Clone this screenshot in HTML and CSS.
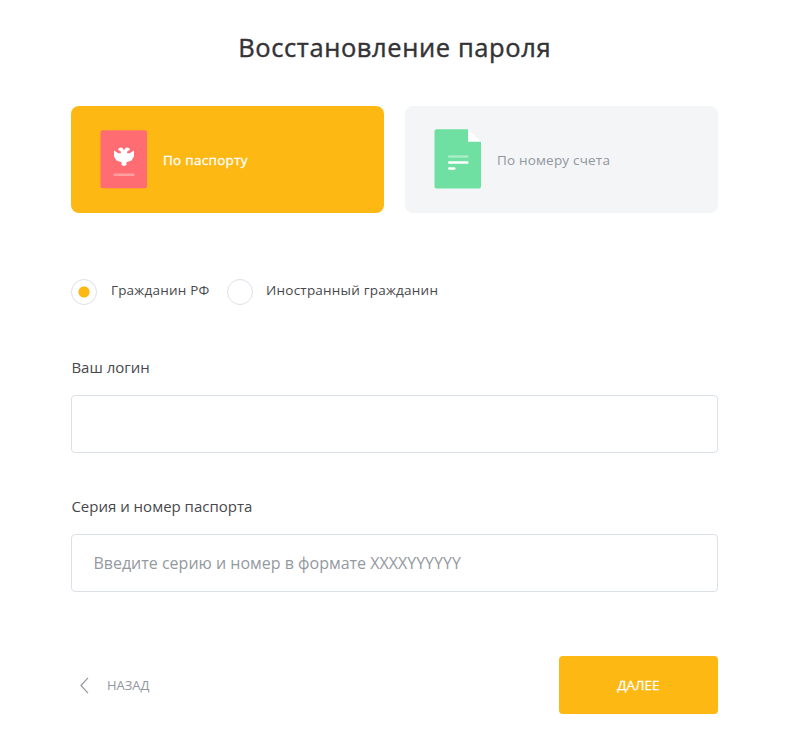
FILE: index.html
```html
<!DOCTYPE html>
<html lang="ru">
<head>
<meta charset="utf-8">
<title>Восстановление пароля</title>
<link rel="stylesheet" href="styles.css">
</head>
<body>
<form class="recovery">
  <h1 class="title"><span>Восстановление пароля</span></h1>
  <div class="methods">
    <button type="button" class="method method-active">
      <svg class="method-icon" width="47" height="60" viewBox="0 0 47 60">
        <rect x=".5" y="1.300" width="46.500" height="58" rx="2" fill="#ff6d72"/>
        <path fill="#fff" d="M14 21.500L18 24Q19.500 24.500 21 24.200L20.500 22Q18.500 22 18 20Q19 18.700 21 18.500Q23 18.500 23.500 20.500L24 21.200L24.500 20.500Q25 18.500 27 18.500Q29 18.700 30 20Q29.500 22 27.500 22L27 24.200Q28.500 24.500 30 24L34 21.500V27.500L31.500 31.500L27 33L26 34.500L27 35.500L24 37.300L21 35.500L22 34.500L21 33L16.500 31.500L14 27.500Z"/>
        <rect x="13.500" y="44.500" width="21" height="2.500" rx="1" fill="#fff" opacity=".35"/>
      </svg>
      <span>По паспорту</span>
    </button>
    <button type="button" class="method">
      <svg class="method-icon" width="47" height="60" viewBox="0 0 47 60">
        <path fill="#fff" d="M34 .3L47 12.800H34Z"/>
        <path fill="#70e0a2" d="M2.500 .3H34V12.800H47V57.500Q47 59.500 45 59.500H2.500Q.5 59.500 .5 57.500V2.300Q.5 .3 2.500 .3Z"/>
        <rect x="14" y="26.300" width="20.500" height="2.500" rx="1" fill="#fff" opacity=".4"/>
        <rect x="14" y="32.300" width="20.500" height="2.500" rx="1.250" fill="#fff"/>
        <rect x="14" y="38.300" width="7.500" height="2.500" rx="1.250" fill="#fff"/>
      </svg>
      <span>По номеру счета</span>
    </button>
  </div>
  <div class="citizenship">
    <label class="option"><input class="radio" type="radio" name="citizen" checked><span>Гражданин РФ</span></label>
    <label class="option"><input class="radio" type="radio" name="citizen"><span>Иностранный гражданин</span></label>
  </div>
  <label class="field">
    <span class="field-label">Ваш логин</span>
    <input class="field-input" type="text">
  </label>
  <label class="field">
    <span class="field-label">Серия и номер паспорта</span>
    <input class="field-input" type="text" placeholder="Введите серию и номер в формате XXXXYYYYYY">
  </label>
  <div class="actions">
    <button type="button" class="back">
      <svg width="9" height="17" viewBox="0 0 9 17"><path d="M8 .8L1 8.500L8 16.200" fill="none" stroke="#92979e" stroke-width="1.200"/></svg>
      <span>НАЗАД</span>
    </button>
    <button type="button" class="next">ДАЛЕЕ</button>
  </div>
</form>
</body>
</html>
```
FILE: styles.css
```css
* { box-sizing: border-box; }
body {
  margin: 0;
  background: #fff;
  color: #48484b;
  font-family: "Open Sans", "Noto Sans", sans-serif;
}
button {
  border: 0;
  padding: 0;
  background: none;
  font: inherit;
  color: #92969d;
}
.recovery {
  width: 646.5px;
  margin-left: 71.4px;
  padding-top: 27px;
}
.title {
  margin: 0;
  height: 40px;
  line-height: 40px;
  text-align: center;
  font-size: 25.5px;
  font-weight: 400;
  letter-spacing: .6px;
  -webkit-text-stroke: .4px #333336;
  color: #333336;
}
.methods {
  display: grid;
  grid-template-columns: 1fr 1fr;
  gap: 21.5px;
  margin-top: 39px;
}
.method {
  display: flex;
  align-items: center;
  gap: 15.5px;
  height: 107px;
  padding-left: 29px;
  border-radius: 8px;
  background: #f3f5f7;
  font-size: 13.5px;
  letter-spacing: .2px;
}
.method-icon {
  flex: none;
  margin-bottom: 1px;
}
.method-active {
  background: #fdb813;
  color: #fff;
  letter-spacing: .3px;
  -webkit-text-stroke: .3px #fff;
}
.citizenship {
  display: flex;
  gap: 17px;
  height: 26px;
  margin-top: 66px;
}
.option {
  display: flex;
  gap: 13.5px;
  font-size: 13.5px;
  letter-spacing: .22px;
  line-height: 23px;
  white-space: nowrap;
}
.radio {
  appearance: none;
  flex: none;
  width: 26px;
  height: 26px;
  margin: 0;
  border: 1px solid #dce1e8;
  border-radius: 50%;
}
.radio:checked {
  background: radial-gradient(circle, #fdb813 5.2px, transparent 5.9px);
}
.field {
  display: block;
  margin-top: 42px;
}
.citizenship + .field { margin-top: 51px; }
.field-label {
  display: block;
  width: max-content;
  height: 24px;
  line-height: 22px;
  font-size: 15px;
}
.field-input {
  display: block;
  width: 100%;
  height: 58px;
  margin-top: 15px;
  padding: 0 21px;
  border: 1px solid #dce1e8;
  border-radius: 4px;
  background: #fff;
  font: 16px "Open Sans", "Noto Sans", sans-serif;
}
.field-input::placeholder { color: #94999f; opacity: 1; }
.actions {
  display: flex;
  justify-content: space-between;
  height: 58px;
  margin-top: 64px;
}
.back {
  display: flex;
  align-items: center;
  gap: 18px;
  padding-left: 8.5px;
  font-size: 13px;
}
.next {
  width: 159px;
  border-radius: 4px;
  background: #fdb813;
  color: #fff;
  font-size: 13.5px;
  -webkit-text-stroke: .3px #fff;
}
```
